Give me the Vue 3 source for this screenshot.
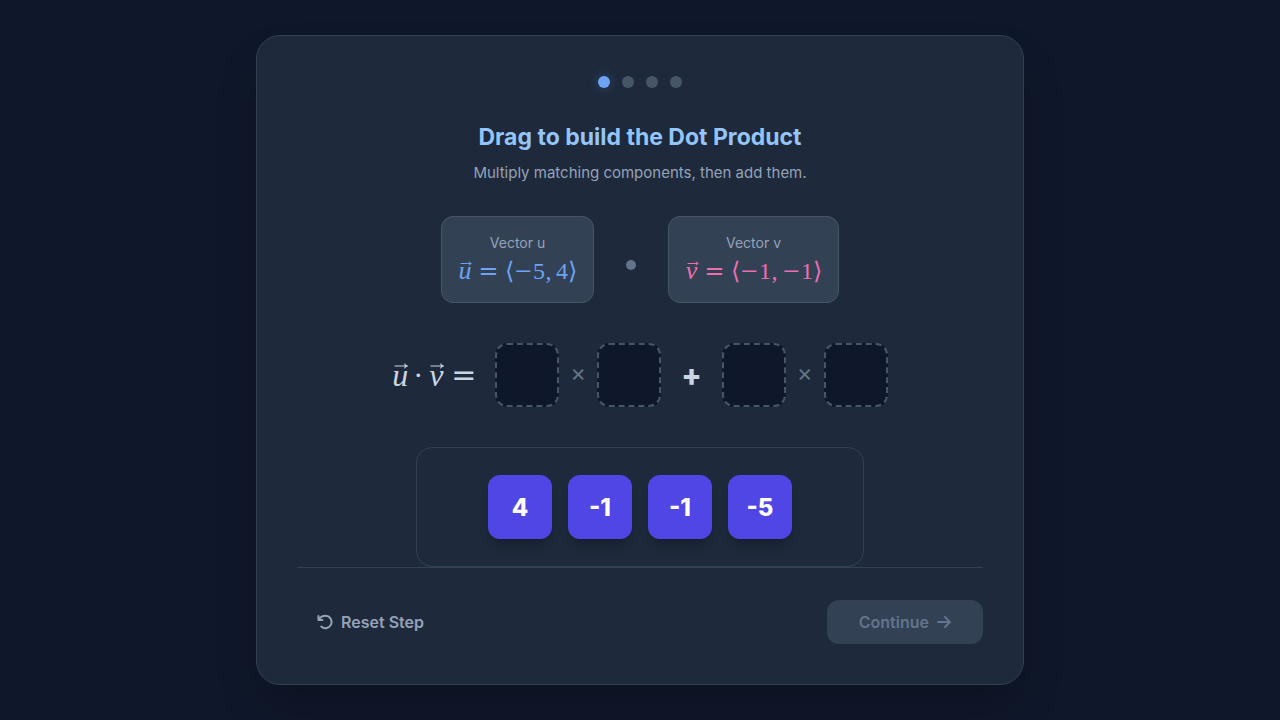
<script setup>
import { ref } from 'vue'

const steps = 4
const current = ref(0)
const tiles = [4, -1, -1, -5]
const vectors = [
  { name: 'u', comps: [-5, 4] },
  { name: 'v', comps: [-1, -1] },
]
</script>

<template>
  <main class="page">
    <section class="card">
      <div class="dots">
        <span v-for="n in steps" :key="n" class="step" :class="{ active: n - 1 === current }"></span>
      </div>
      <h1>Drag to build the Dot Product</h1>
      <p class="hint">Multiply matching components, then add them.</p>

      <div class="vectors">
        <template v-for="(v, i) in vectors" :key="v.name">
          <span v-if="i" class="bullet"></span>
          <div class="vector" :class="v.name">
            <div class="label">Vector {{ v.name }}</div>
            <div class="math">
              <span class="sym" :class="'sym-' + v.name">{{ v.name }}<svg class="arrow" viewBox="0 0 12 5"><path d="M0.5 2.5H11M9 0.5Q9.5 2 11.3 2.5Q9.5 3 9 4.5" /></svg></span>
              <span class="op eq">=</span>
              <span class="angle">⟨</span>
              <template v-for="(c, k) in v.comps" :key="k">
                <span v-if="k" class="comma">,</span>
                <span v-if="c < 0" class="op minus">−</span>
                <span class="num">{{ Math.abs(c) }}</span>
              </template>
              <span class="angle">⟩</span>
            </div>
          </div>
        </template>
      </div>

      <div class="equation">
        <div class="math large">
          <span class="sym sym-u">u<svg class="arrow" viewBox="0 0 12 5"><path d="M0.5 2.5H11M9 0.5Q9.5 2 11.3 2.5Q9.5 3 9 4.5" /></svg></span>
          <span class="cdot">·</span>
          <span class="sym sym-v">v<svg class="arrow" viewBox="0 0 12 5"><path d="M0.5 2.5H11M9 0.5Q9.5 2 11.3 2.5Q9.5 3 9 4.5" /></svg></span>
          <span class="op eq">=</span>
        </div>
        <div class="pair"><div class="slot"></div><span class="times">×</span><div class="slot"></div></div>
        <span class="plus">+</span>
        <div class="pair"><div class="slot"></div><span class="times">×</span><div class="slot"></div></div>
      </div>

      <div class="tray">
        <button v-for="(t, i) in tiles" :key="i" class="tile" type="button" draggable="true">{{ t }}</button>
      </div>

      <footer>
        <button class="reset" type="button">
          <svg width="16" height="16" viewBox="0 0 16 16"><path d="M1.4 2v4H5.4M1.8 5.6Q4.2 1.8 8.4 1.8A6.2 6.2 0 1 1 4.2 12.6" /></svg>
          Reset Step
        </button>
        <button class="continue" type="button" disabled>
          Continue
          <svg width="14" height="14" viewBox="0 0 14 14"><path d="M1 7h12M8 2l5 5-5 5" /></svg>
        </button>
      </footer>
    </section>
  </main>
</template>

<style>
body {
  background: #0f172a;
}
</style>

<style scoped>
.page {
  min-height: 100vh;
  display: flex;
  align-items: center;
  justify-content: center;
  font-family: Inter, "Liberation Sans", sans-serif;
  color: #cbd5e1;
}
.card {
  box-sizing: border-box;
  width: 100%;
  max-width: 768px;
  padding: 40px;
  background: #1e293b;
  border: 1px solid #334155;
  border-radius: 24px;
  box-shadow: 0 24px 48px -12px rgba(0, 0, 0, 0.25);
}
.dots {
  display: flex;
  justify-content: center;
  gap: 12px;
  margin-bottom: 33px;
}
.step {
  width: 12px;
  height: 12px;
  border-radius: 50%;
  background: #475569;
}
.step.active {
  background: #6ca3f4;
  box-shadow: 0 0 12px rgba(96, 165, 250, 0.3);
}
h1 {
  margin: 0 0 8px;
  font-size: 23px;
  line-height: 32px;
  font-weight: 700;
  text-align: center;
  color: #93c5fd;
}
.hint {
  margin: 0 0 31px;
  font-size: 15px;
  line-height: 24px;
  text-align: center;
  color: #94a3b8;
}
.vectors {
  display: flex;
  justify-content: center;
  align-items: center;
  gap: 32px;
  margin-bottom: 40px;
}
.vector {
  padding: 16px;
  background: #334155;
  border: 1px solid #475569;
  border-radius: 12px;
}
.vector.u {
  color: #6ca3f4;
}
.vector.v {
  color: #eb6fb0;
}
.label {
  margin-bottom: 3px;
  font-size: 14px;
  line-height: 20px;
  text-align: center;
  color: #94a3b8;
}
.bullet {
  width: 10px;
  height: 10px;
  margin-top: 10px;
  border-radius: 50%;
  background: #64748b;
}
.math {
  display: flex;
  font-family: "Liberation Serif", serif;
  font-size: 24px;
  line-height: 30px;
}
.math span {
  display: flex;
  justify-content: center;
  height: 30px;
}
.sym {
  position: relative;
  font-size: 26px;
  font-style: italic;
}
.sym-u {
  width: 14px;
}
.sym-v {
  width: 13px;
}
.op {
  width: 19px;
  font-family: "DejaVu Math TeX Gyre", "Liberation Serif", serif;
}
.minus {
  font-family: "Liberation Serif", serif;
  font-size: 30px;
}
.eq {
  margin: 0 7px;
}
.angle {
  width: 9px;
  font-family: "DejaVu Sans", sans-serif;
  font-weight: 200;
}
.num {
  width: 12px;
}
.comma {
  width: 7px;
  margin-right: 4px;
}
.arrow {
  position: absolute;
  top: 5px;
  left: 2px;
  width: 12px;
  height: 5px;
  fill: none;
  stroke: currentColor;
}
.large {
  font-size: 30px;
  line-height: 36px;
}
.large span {
  height: 36px;
}
.large .sym {
  width: 16px;
  font-size: 32px;
}
.large .cdot {
  width: 8px;
  margin: 0 6px;
}
.large .op {
  width: 23px;
  margin: 0 0 0 8px;
}
.large .arrow {
  top: 6px;
  width: 14px;
  height: 6px;
}
.equation {
  display: flex;
  align-items: center;
  justify-content: center;
  gap: 20px;
  margin-bottom: 40px;
}
.pair {
  display: flex;
  align-items: center;
  gap: 11px;
}
.slot {
  box-sizing: border-box;
  width: 64px;
  height: 64px;
  background: #0f172a;
  border: 2px dashed #475569;
  border-radius: 12px;
}
.times {
  margin-bottom: 5px;
  font-size: 24px;
  line-height: 28px;
  color: #64748b;
}
.plus {
  font-size: 30px;
  line-height: 36px;
  font-weight: 800;
}
.tray {
  box-sizing: border-box;
  display: flex;
  align-items: center;
  justify-content: center;
  gap: 16px;
  max-width: 448px;
  min-height: 120px;
  margin: 0 auto;
  padding: 24px;
  border: 1px solid #334155;
  border-radius: 16px;
}
button {
  padding: 0;
  border: 0;
  border-radius: 12px;
  font-family: inherit;
}
.tile {
  width: 64px;
  height: 64px;
  background: #4f46e5;
  color: #fff;
  font-size: 24px;
  font-weight: 800;
  box-shadow: 0 8px 12px -4px rgba(0, 0, 0, 0.3);
}
footer {
  display: flex;
  justify-content: space-between;
  padding-top: 32px;
  border-top: 1px solid #334155;
}
footer button {
  display: flex;
  align-items: center;
  gap: 8px;
  height: 44px;
  font-size: 16px;
  font-weight: 600;
}
.reset {
  padding: 0 20px;
  background: transparent;
  color: #94a3b8;
}
.continue {
  padding: 0 32px;
  background: #334155;
  color: #64748b;
}
footer svg {
  fill: none;
  stroke: currentColor;
  stroke-width: 2;
  stroke-linecap: round;
  stroke-linejoin: round;
}
</style>
